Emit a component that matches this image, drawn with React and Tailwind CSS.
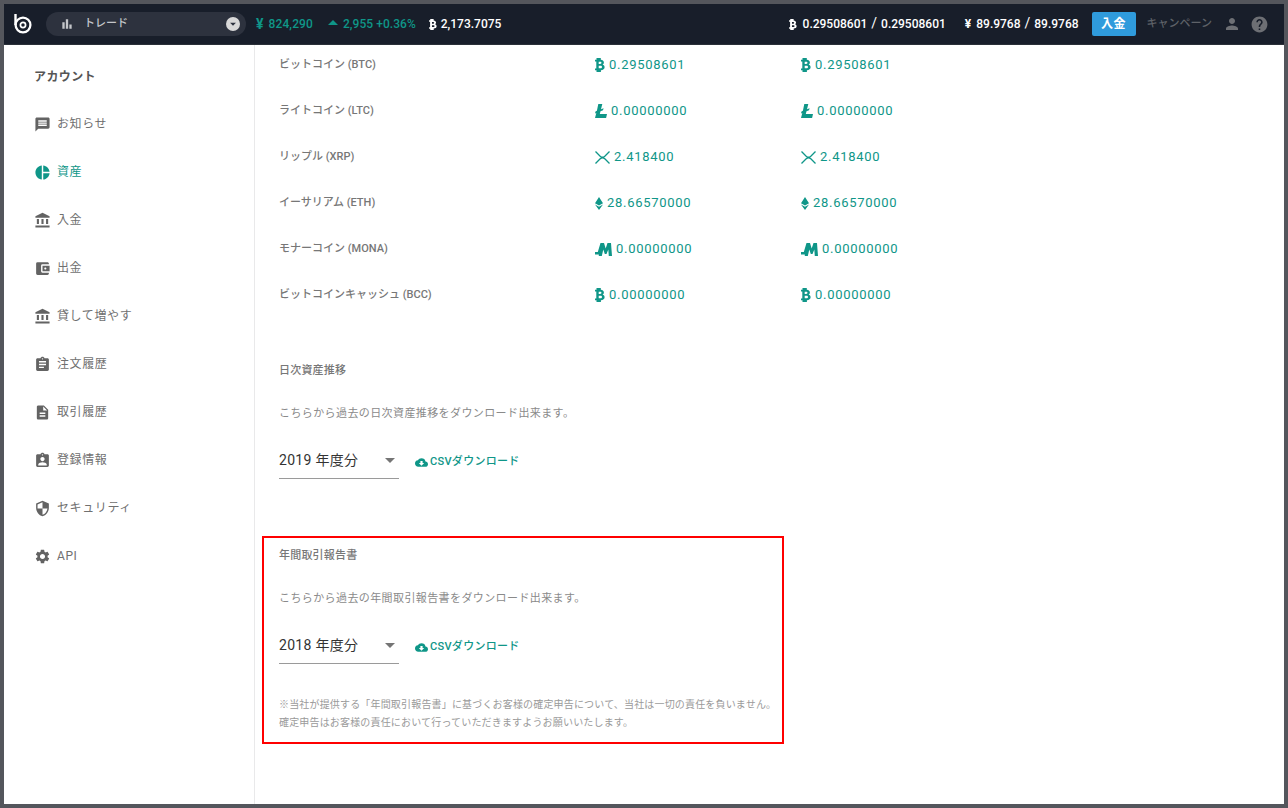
import React from "react";
import { MdMessage, MdAccountBalance, MdAccountBalanceWallet, MdAssignment, MdDescription, MdAssignmentInd, MdSecurity, MdSettings, MdBarChart, MdArrowDropDown, MdCloudDownload, MdPerson, MdHelp, MdPieChart } from "react-icons/md";

const Btc = ({ className = "" }) => (
  <svg viewBox="0 0 10 14" className={className} fill="currentColor">
    <path fillRule="evenodd" d="M0 1.700h1.500V0h4.300v1.800C7.800 2.100 8.900 3.100 8.900 4.600c0 1-.5 1.800-1.300 2.200 1.200.3 2 1.200 2 2.400 0 1.800-1.500 2.800-3.700 3V14H1.500v-1.700H0v-1.900h1.300V3.600H0zM3.700 3.700v2.300h1.500c.8 0 1.300-.4 1.300-1.150S6 3.700 5.200 3.700zm0 4.100v2.500h1.800c.9 0 1.500-.4 1.500-1.250S6.400 7.800 5.500 7.800z" />
  </svg>
);
const Ltc = ({ className = "" }) => (
  <svg viewBox="0 0 12 14" className={className} fill="currentColor">
    <path d="M3.300 0h4L6 5.200l2.600-1L8 6.300 5.500 7.300 4.800 10H12l-.9 4H0l1.300-5.100-1.300.5.5-2 1.400-.6z" />
  </svg>
);
const Xrp = ({ className = "" }) => (
  <svg viewBox="0 0 15 13" className={className} fill="none" stroke="currentColor" strokeWidth="1.300">
    <path d="M.5.500 5.200 5.200c1.300 1.200 3.300 1.200 4.600 0L14.500.500M.5 12.500l4.700-4.700c1.300-1.200 3.300-1.200 4.600 0l4.700 4.700" />
  </svg>
);
const Eth = ({ className = "" }) => (
  <svg viewBox="0 0 8 13" className={className} fill="currentColor">
    <path d="M4 0l4 6.200-4 2.300-4-2.300zM0 7.500l4 2.300 4-2.300L4 13z" />
  </svg>
);
const Mona = ({ className = "" }) => (
  <svg viewBox="0 0 17 13" className={className} fill="currentColor">
    <path d="M5.500 0H9l1.700 5.500L12.500 0H16l1 13h-3.200l-.5-6.500L11.500 11H9.800L8.300 6.500 6.800 13H3.800v-1.500H0V9h2.800z" />
  </svg>
);

const Logo = () => (
  <svg viewBox="0 0 18 20" className="w-[18px] h-[20px] text-white" fill="none" stroke="currentColor">
    <path d="M1.500 0V11" strokeWidth="2.400" />
    <circle cx="9" cy="11" r="7.400" strokeWidth="2.300" />
    <circle cx="9" cy="11" r="2.600" strokeWidth="1.700" />
  </svg>
);

const nav = [
  ["お知らせ", <MdMessage size={17} />],
  ["資産", <MdPieChart size={17} />, true],
  ["入金", <MdAccountBalance size={17} />],
  ["出金", <MdAccountBalanceWallet size={17} />],
  ["貸して増やす", <MdAccountBalance size={17} />],
  ["注文履歴", <MdAssignment size={17} />],
  ["取引履歴", <MdDescription size={17} />],
  ["登録情報", <MdAssignmentInd size={17} />],
  ["セキュリティ", <MdSecurity size={17} />],
  ["API", <MdSettings size={17} />],
];

const rows = [
  ["ビットコイン (BTC)", <Btc className="w-[10px] h-[14px]" />, "0.29508601"],
  ["ライトコイン (LTC)", <Ltc className="w-[12px] h-[14px]" />, "0.00000000"],
  ["リップル (XRP)", <Xrp className="w-[15px] h-[13px]" />, "2.418400"],
  ["イーサリアム (ETH)", <Eth className="w-[8px] h-[13px]" />, "28.66570000"],
  ["モナーコイン (MONA)", <Mona className="w-[17px] h-[13px]" />, "0.00000000"],
  ["ビットコインキャッシュ (BCC)", <Btc className="w-[10px] h-[14px]" />, "0.00000000"],
];

const YearSelect = ({ label }) => (
  <div className="flex items-center">
    <div className="w-[120px] h-[38px] border-b border-[#9a9a9a] flex items-center justify-between text-[14px] text-[#333] tracking-[0.3px] pt-[1px]">
      <span>{label}</span>
      <MdArrowDropDown size={24} className="text-[#757575] mr-[-3px]" />
    </div>
    <div className="ml-[16px] mt-[5px] flex items-center gap-[2px] text-[#0f9688] text-[11px] font-medium tracking-[0.3px]">
      <MdCloudDownload size={13} />
      <span>CSVダウンロード</span>
    </div>
  </div>
);

export default function App() {
  return (
    <div className="w-[1288px] h-[808px] bg-[#54565c] pt-[4px] pl-[4px] pr-[4px] pb-[4px] overflow-hidden [font-family:Roboto,'Noto_Sans_CJK_JP',sans-serif]">
      <div className="w-full h-full bg-white flex flex-col overflow-hidden">
        <header className="h-[41px] shrink-0 bg-[#181e2a] border-b border-[#2a3038] flex items-center text-[12px] font-medium">
          <div className="w-[42px] pl-[10px] flex items-center"><Logo /></div>
          <div className="w-[200px] h-[24px] rounded-full bg-[#2d323e] flex items-center pl-[14px] pr-[6px] text-[#c4c6ca] text-[11px]">
            <MdBarChart size={14} />
            <span className="ml-[10px] flex-1">トレード</span>
            <span className="w-[14px] h-[14px] rounded-full bg-[#d8d8d8] flex items-center justify-center text-[#2d323e]"><MdArrowDropDown size={14} /></span>
          </div>
          <span className="ml-[10px] text-[#0f9688] flex items-center gap-[5px] tracking-[0.1px]"><span className="font-bold text-[14px] leading-none">¥</span>824,290</span>
          <span className="ml-[15px] flex items-center text-[#0f9688] tracking-[0.05px]">
            <svg viewBox="0 0 10 5" className="w-[10px] h-[5px] mr-[5px] mb-[3px]" fill="currentColor"><path d="M0 5 5 0l5 5z" /></svg>
            2,955 +0.36%
          </span>
          <span className="ml-[13px] flex items-center gap-[4px] text-white"><Btc className="w-[8px] h-[11px]" />2,173.7075</span>
          <div className="ml-auto flex items-center text-white">
            <Btc className="w-[8px] h-[11px]" />
            <span className="ml-[6px]">0.29508601</span>
            <span className="mx-[4px] text-[14px] font-normal leading-none pb-[3px]">/</span>
            <span>0.29508601</span>
            <span className="ml-[19px] font-bold">¥</span>
            <span className="ml-[5px]">89.9768</span>
            <span className="mx-[4px] text-[14px] font-normal leading-none pb-[3px]">/</span>
            <span>89.9768</span>
            <span className="ml-[13px] w-[44px] h-[24px] rounded-[2px] bg-[#2f9bdc] flex items-center justify-center text-[12px] font-bold tracking-[0.5px]">入金</span>
            <span className="ml-[11px] text-[#5f6268] text-[11px]">キャンペーン</span>
            <span className="ml-[11px] text-[#6d6f74]"><MdPerson size={18} /></span>
            <span className="ml-[9px] mr-[15px] text-[#6d6f74]"><MdHelp size={19} /></span>
          </div>
        </header>
        <div className="flex flex-1 min-h-0">
          <aside className="w-[251px] shrink-0 border-r border-[#e9e9ea] pl-[30px]">
            <div className="h-[24px] mt-[20px] mb-[11px] flex items-center text-[12px] font-bold text-[#555] tracking-[0.4px]">アカウント</div>
            {nav.map(([label, icon, active]) => (
              <div key={label} className={`h-[48px] flex items-center text-[12px] tracking-[0.6px] ${active ? "text-[#0f9688]" : "text-[#707070]"}`}>
                <span className={`w-[17px] flex justify-center mr-[6px] ${active ? "" : "text-[#636363]"}`}>{icon}</span>
                <span>{label}</span>
              </div>
            ))}
          </aside>
          <main className="flex-1 min-w-0 pl-[7px]">
            <div className="pl-[17px] -mt-[3px]">
              {rows.map(([label, icon, val]) => (
                <div key={label} className="h-[46px] flex items-center">
                  <div className="w-[316px] text-[11px] font-medium text-[#777]">{label}</div>
                  <div className="w-[206px] flex items-center gap-[4px] text-[13px] text-[#0f9688] tracking-[0.7px]">{icon}<span>{val}</span></div>
                  <div className="flex items-center gap-[4px] text-[13px] text-[#0f9688] tracking-[0.7px]">{icon}<span>{val}</span></div>
                </div>
              ))}
              <div className="mt-[45px] text-[11px] leading-[16px] font-medium text-[#777] tracking-[0.2px]">日次資産推移</div>
              <div className="mt-[27px] text-[11px] leading-[16px] text-[#8a8a8a] tracking-[0.4px]">こちらから過去の日次資産推移をダウンロード出来ます。</div>
              <div className="mt-[19px]"><YearSelect label="2019 年度分" /></div>
            </div>
            <div className="mt-[57px] w-[522px] h-[208px] border-2 border-[#ff0000] pl-[15px] pt-[10px]">
              <div className="text-[11px] leading-[16px] font-medium text-[#777] tracking-[0.2px]">年間取引報告書</div>
              <div className="mt-[27px] text-[11px] leading-[16px] text-[#8a8a8a] tracking-[0.4px]">こちらから過去の年間取引報告書をダウンロード出来ます。</div>
              <div className="mt-[19px]"><YearSelect label="2018 年度分" /></div>
              <div className="mt-[32px] text-[10px] leading-[18px] text-[#9a9a9a] tracking-[0.17px] whitespace-nowrap">
                ※当社が提供する「年間取引報告書」に基づくお客様の確定申告について、当社は一切の責任を負いません。<br />
                確定申告はお客様の責任において行っていただきますようお願いいたします。
              </div>
            </div>
          </main>
        </div>
      </div>
    </div>
  );
}
